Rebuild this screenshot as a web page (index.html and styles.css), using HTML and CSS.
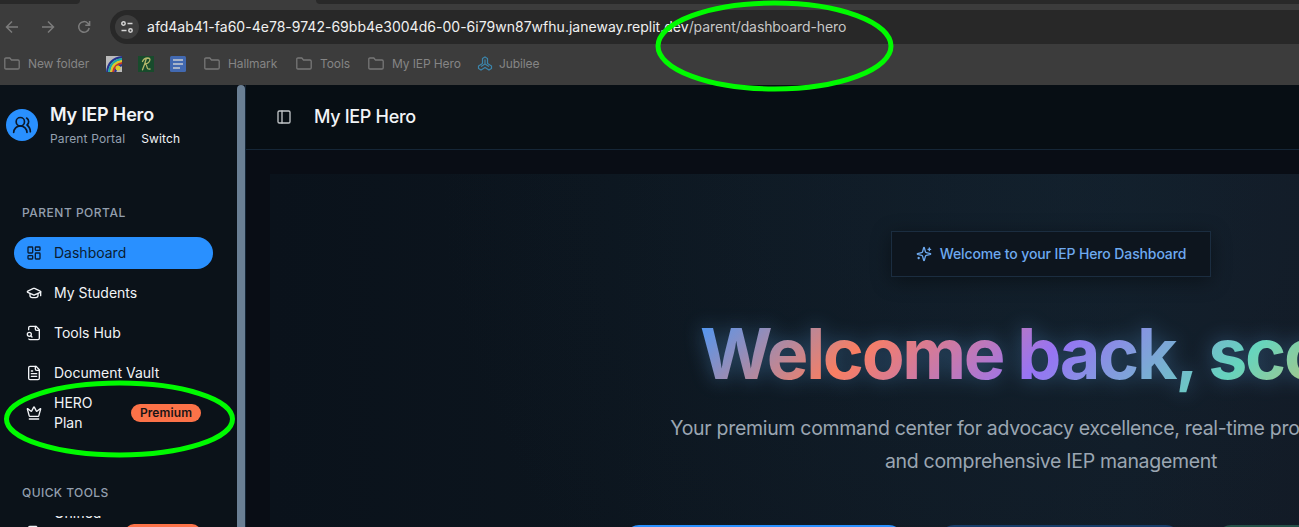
FILE: index.html
```html
<!DOCTYPE html>
<html lang="en">
<head>
<meta charset="utf-8">
<title>My IEP Hero</title>
<link rel="stylesheet" href="styles.css">
</head>
<body>
<svg class="defs" width="0" height="0">
  <symbol id="folder" viewBox="0 0 16 14"><path d="M.8 2.2q0-1.2 1.2-1.2h3.8l1.7 2H14q1.2 0 1.2 1.2v6.6q0 1.2-1.2 1.2H2q-1.200 0-1.200-1.200z" fill="none" stroke="currentColor" stroke-width="1.3"/></symbol>
</svg>
<div class="browser">
  <div class="tabs"><span class="tab-edge left"></span><span class="tab-edge right"></span></div>
  <div class="toolbar">
    <svg class="nav back" viewBox="0 0 14 14"><path d="M13 7H1.500M7 1.500 1.500 7 7 12.500"/></svg>
    <svg class="nav forward" viewBox="0 0 14 14"><path d="M1 7h11.500M7 1.500 12.500 7 7 12.500"/></svg>
    <svg class="nav reload" viewBox="0 0 14 14"><path d="M12.200 8A5.300 5.300 0 1 1 10.800 3.200L12.500 5M12.600 1v4.300H8.300"/></svg>
    <div class="address">
      <span class="site"><svg viewBox="0 0 14 14"><circle cx="3.500" cy="3.500" r="1.700"/><path d="M7.500 3.500h5M1.500 10.500h5"/><circle cx="10.500" cy="10.500" r="1.700"/></svg></span>
      <span class="url"><span class="host">afd4ab41-fa60-4e78-9742-69bb4e3004d6-00-6i79wn87wfhu.janeway.replit.dev</span><span class="path">/parent/dashboard-hero</span></span>
    </div>
  </div>
  <div class="bookmarks">
    <span class="bm b1"><svg class="folder"><use href="#folder"/></svg><span>New folder</span></span>
    <svg class="fav f1" viewBox="0 0 16 16"><path fill="#bbb" d="M0 0h16v16H0z"/><g fill="none" stroke-width="2.100"><path d="M1 17Q2 2 17 1" stroke="#25328e"/><path d="M3 17Q4 4 17 3" stroke="#20a7a4"/><path d="M5 17Q6 6 17 5" stroke="#d9c928"/><path d="M7 17Q8 8 17 7" stroke="#c93524"/><path d="M9 17Q10 10 17 9" stroke="#25328e"/></g><circle cx="12" cy="12" r="2.500" fill="#d8cc2c"/></svg>
    <svg class="fav f2" viewBox="0 0 16 16"><path fill="#184b2c" d="M0 0h16v16H0z"/><path d="M4.500 5.500Q6 2 9.500 2q3.500.2 2 3.300Q10 8 7 8q1.800.6 2 3t3 2M8.300 2.500Q7 8 4.500 13.800" fill="none" stroke="#b4b76b" stroke-width="1.300" stroke-linecap="round"/></svg>
    <svg class="fav f3" viewBox="0 0 16 16"><rect width="16" height="16" rx="1.500" fill="#4269b1"/><path d="M3 4h10M3 8h10M3 12h7" stroke="#c8cbd1" stroke-width="1.700"/></svg>
    <span class="bm b2"><svg class="folder"><use href="#folder"/></svg><span>Hallmark</span></span>
    <span class="bm b3"><svg class="folder"><use href="#folder"/></svg><span>Tools</span></span>
    <span class="bm b4"><svg class="folder"><use href="#folder"/></svg><span>My IEP Hero</span></span>
    <span class="bm b5"><svg class="jubilee" viewBox="0 0 16 16"><path d="M5.500 2.500 8 1l2.500 1.500v5l4 2.500v2.500L12 14l-4-2.500L4 14l-2.500-1.500V10l4-2.500zM8 3.500V8l-4 2.500M8 8l4 2.500"/></svg><span>Jubilee</span></span>
  </div>
</div>
<div class="app">
  <aside class="sidebar">
    <div class="brand">
      <span class="avatar"><svg class="lucide" viewBox="0 0 24 24"><path d="M18 21a8 8 0 0 0-16 0"/><circle cx="10" cy="8" r="5"/><path d="M22 20c0-3.370-2-6.500-4-8a5 5 0 0 0-.450-8.300"/></svg></span>
      <div><div class="brand-name"><span>My IEP Hero</span></div><div class="brand-sub"><span class="portal">Parent Portal</span><span class="switch">Switch</span></div></div>
    </div>
    <div class="section"><span>PARENT PORTAL</span></div>
    <nav>
      <a class="item active"><svg class="lucide" viewBox="0 0 24 24"><rect x="3" y="3" width="7" height="9" rx="1"/><rect x="14" y="3" width="7" height="5" rx="1"/><rect x="14" y="12" width="7" height="9" rx="1"/><rect x="3" y="16" width="7" height="5" rx="1"/></svg><span>Dashboard</span></a>
      <a class="item"><svg class="lucide" viewBox="0 0 24 24"><path d="M21.420 10.922a1 1 0 0 0-.019-1.838L12.830 5.180a2 2 0 0 0-1.660 0L2.600 9.080a1 1 0 0 0 0 1.832l8.570 3.908a2 2 0 0 0 1.660 0z"/><path d="M22 10v6M6 12.500V16a6 3 0 0 0 12 0v-3.500"/></svg><span>My Students</span></a>
      <a class="item"><svg class="lucide" viewBox="0 0 24 24"><path d="M14 2v4a2 2 0 0 0 2 2h4"/><path d="M4.268 21A2 2 0 0 0 6 22h12a2 2 0 0 0 2-2V7l-5-5H6a2 2 0 0 0-2 2v3"/><path d="m9 18-1.500-1.500"/><circle cx="5" cy="14" r="3"/></svg><span>Tools Hub</span></a>
      <a class="item"><svg class="lucide" viewBox="0 0 24 24"><path d="M15 2H6a2 2 0 0 0-2 2v16a2 2 0 0 0 2 2h12a2 2 0 0 0 2-2V7Z"/><path d="M14 2v4a2 2 0 0 0 2 2h4M10 9H8M16 13H8M16 17H8"/></svg><span>Document Vault</span></a>
      <a class="item"><svg class="lucide" viewBox="0 0 24 24"><path d="M11.562 3.266a.5.5 0 0 1 .876 0L15.390 8.870a1 1 0 0 0 1.516.294L21.183 5.500a.5.5 0 0 1 .798.519l-2.834 10.246a1 1 0 0 1-.956.734H5.810a1 1 0 0 1-.957-.734L2.020 6.020a.5.5 0 0 1 .798-.519l4.276 3.664a1 1 0 0 0 1.516-.294zM5 21h14"/></svg><span class="two">HERO<br>Plan</span><b class="badge"><span>Premium</span></b></a>
    </nav>
    <div class="section quick"><span>QUICK TOOLS</span></div>
    <div class="clipped">
      <a class="item"><svg class="lucide" viewBox="0 0 24 24"><path d="M15 2H6a2 2 0 0 0-2 2v16a2 2 0 0 0 2 2h12a2 2 0 0 0 2-2V7Z"/></svg><span class="cut">Unified</span><b class="badge wide"></b></a>
    </div>
  </aside>
  <div class="scrollbar"></div>
  <main>
    <header><svg class="lucide" viewBox="0 0 24 24"><rect x="3" y="3" width="18" height="18" rx="2"/><path d="M9 3v18"/></svg><span>My IEP Hero</span></header>
    <section class="hero">
      <div class="welcome"><svg class="lucide" viewBox="0 0 24 24"><path d="M9.937 15.500A2 2 0 0 0 8.500 14.063l-6.135-1.582a.5.5 0 0 1 0-.962L8.500 9.936A2 2 0 0 0 9.937 8.500l1.582-6.135a.5.5 0 0 1 .963 0L14.063 8.500A2 2 0 0 0 15.500 9.937l6.135 1.581a.5.5 0 0 1 0 .964L15.500 14.063a2 2 0 0 0-1.437 1.437l-1.582 6.135a.5.5 0 0 1-.963 0zM20 3v4M22 5h-4M4 17v2M5 18H3"/></svg><span>Welcome to your IEP Hero Dashboard</span></div>
      <h1><span>Welcome back, scott!</span></h1>
      <p><span class="l1">Your premium command center for advocacy excellence, real-time progress tracking,</span><span class="l2">and comprehensive IEP management</span></p>
      <div class="actions"><i class="a1"></i><i class="a2"></i><i class="a3"></i></div>
    </section>
  </main>
</div>
<svg class="rings" viewBox="0 0 1299 527"><ellipse cx="774.500" cy="46" rx="116.500" ry="43"/><ellipse cx="119.500" cy="419" rx="113" ry="36"/></svg>
</body>
</html>
```
FILE: styles.css
```css
*{box-sizing:border-box}
body{margin:0;width:1299px;height:527px;overflow:hidden;background:#090d15;font-family:Inter,"Liberation Sans",sans-serif;color:#f2f4f7;position:relative}
.defs{position:absolute}
span{white-space:nowrap}
.browser{height:85px;background:#3c3c3c;overflow:hidden}
.tabs{height:4px;display:flex;justify-content:space-between;background:#3c3c3c}
.tab-edge{height:4px;background:#292929}
.left{width:80px;border-bottom-right-radius:8px}
.right{width:983px;border-bottom-left-radius:8px}
.toolbar{height:46px;display:flex;align-items:center;padding-left:5px}
.nav{width:14px;height:14px;fill:none;stroke:#7c7c7c;stroke-width:1.500;flex:none}
.forward{margin-left:22px}.reload{margin-left:22px}
.address{margin-left:19px;height:34px;flex:1;background:#282828;border-radius:17px 0 0 17px;display:flex;align-items:center;padding-left:5px}
.site{width:24px;height:24px;border-radius:50%;background:#3d3d3d;display:grid;place-items:center}
.site svg{width:14px;height:14px;fill:none;stroke:#d5d5d5;stroke-width:1.500}
.url{font-size:14px;margin-left:8px;color:#c7c7c7;line-height:20px}
.host{color:#f0f0f0;letter-spacing:.02px}
.path{letter-spacing:-.09px}
.bookmarks{height:27px;display:flex;align-items:center;padding-left:4px;font-size:12px;letter-spacing:-.1px;color:#858585}
.bm{display:flex;align-items:center;gap:8px}
.folder{width:16px;height:14px;color:#777}
.fav{width:16px;height:16px;flex:none}
.b1{width:102px}.f2,.f3{margin-left:16px}.b2{margin-left:18px;width:92px}.b3{width:72px}.b4{width:109px}.b5{gap:6px}
.jubilee{width:16px;height:16px;fill:none;stroke:#3c85ab;stroke-width:1.200}
.app{display:flex;height:442px;overflow:hidden}
.sidebar{width:237px;background:#0b1219;overflow:hidden;flex:none}
.scrollbar{width:8px;background:#6a7f94;border-radius:4px 4px 0 0;flex:none}
.lucide{width:16px;height:16px;fill:none;stroke:currentColor;stroke-width:2;stroke-linecap:round;stroke-linejoin:round;flex:none}
.brand{display:flex;gap:12px;padding:18px 0 0 6px;height:114px}
.avatar{width:32px;height:32px;border-radius:50%;background:#2990ff;color:#0b1829;display:grid;place-items:center;margin-top:6px}
.avatar .lucide{width:20px;height:20px}
.brand-name{font-size:18px;font-weight:600;line-height:24px;letter-spacing:-.15px}
.brand-sub{display:flex;gap:16px;font-size:12px;line-height:16px;margin-top:4px;color:#94a0b0;letter-spacing:.15px}
.switch{color:#f2f4f7}
.section{height:38px;padding:6px 22px;font-size:12px;font-weight:500;letter-spacing:.5px;line-height:16px;color:#939fae}
.section.quick{height:22px;margin-top:50px;letter-spacing:.42px}
nav{display:grid;gap:8px;padding:0 24px 0 14px}
.item{display:flex;align-items:center;height:32px;padding:0 12px;gap:12px;font-size:14px;line-height:20px}
.active{background:#2990ff;color:#0a1c32;border-radius:16px}
.badge{margin-left:auto;width:70px;height:18px;border-radius:9px;background:#fc7248;color:#1a1416;font-size:12px;line-height:18px;font-weight:600;text-align:center;letter-spacing:.1px}
.clipped{height:11px;overflow:hidden;padding:0 24px 0 14px;margin-top:15px}
.clipped .item{align-items:flex-start}
.clipped .lucide{margin-top:9px}
.clipped .cut{margin-top:-13px}
.clipped .badge{width:76px;margin-top:8px}
main{flex:1;min-width:0;background:#090d15;border-left:1px solid #152637}
header{height:65px;border-bottom:1px solid #152637;background:#070e14;display:flex;align-items:center;padding:0 0 1px 30px;gap:22px;font-size:18px;font-weight:500;letter-spacing:-.32px}
header .lucide{color:#c1c5c8}
.hero{width:1562px;height:500px;margin:24px 0 0 24px;padding-top:57px;display:flex;flex-direction:column;align-items:center;background:radial-gradient(circle at 790px 0,#15293866,transparent 620px),linear-gradient(90deg,#0a121b,#0c151e 22%,#111b26 55%,#131722 75%)}
.welcome{width:320px;height:46px;border:1px solid #1b2d40;background:#0d151e;display:flex;align-items:center;justify-content:center;gap:8px;padding-bottom:1px;font-size:14px;font-weight:500;letter-spacing:-.12px;color:#6eaaf0;box-shadow:0 4px 20px #0006}
h1{margin:32px 0 0;font-size:70px;line-height:90px;font-weight:700;letter-spacing:-2.350px}
h1 span{display:block;padding-right:12px;color:transparent;background:linear-gradient(135deg,#4299ff 0%,#f97e62 25%,#9674f4 50%,#66d4bd 75%,#f6b64a 100%);background-clip:text;filter:drop-shadow(0 0 10px #508bc477)}
p{margin:13px 0 0;font-size:19.500px;line-height:33px;letter-spacing:-.31px;color:#9ba6b2;display:grid;justify-items:center}
.actions{display:flex;margin-top:47px;gap:37px;flex:none}
.actions i{width:278px;height:60px;border-radius:14px;background:#2990ff}
.actions .a2{width:240px;background:#173d69}.actions .a3{width:260px;background:#245048}
.rings{position:absolute;inset:0;width:1299px;height:527px;fill:none;stroke:#00fa00;stroke-width:5;pointer-events:none}
```
